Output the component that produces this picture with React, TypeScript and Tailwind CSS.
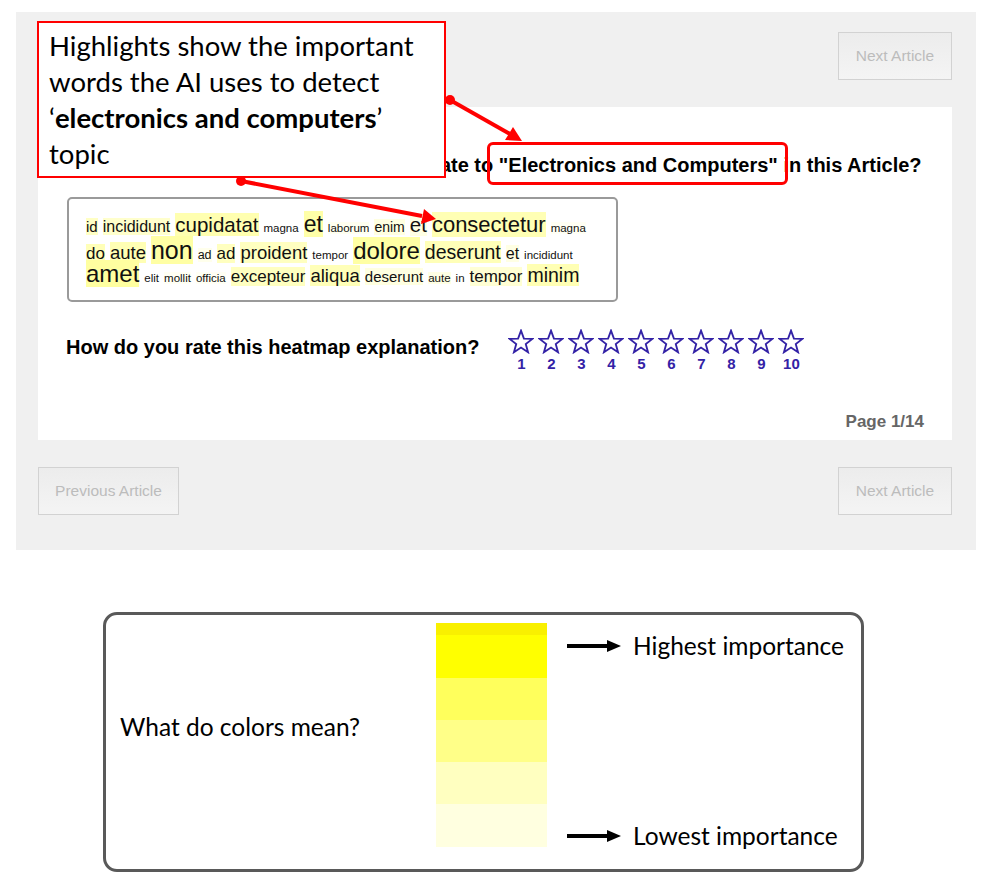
import React from 'react';

type Word = { t: string; size: number; bg: string };

const lines: Word[][] = [
    [
        { t: 'id', size: 15, bg: '#ffffc4' },
        { t: 'incididunt', size: 16, bg: '#ffffcc' },
        { t: 'cupidatat', size: 20.5, bg: '#ffffb0' },
        { t: 'magna', size: 11.5, bg: '#ffffff' },
        { t: 'et', size: 23, bg: '#ffffa8' },
        { t: 'laborum', size: 11.5, bg: '#fffff0' },
        { t: 'enim', size: 14, bg: '#ffffe0' },
        { t: 'et', size: 20.5, bg: '#ffffe4' },
        { t: 'consectetur', size: 22, bg: '#ffffb4' },
        { t: 'magna', size: 11.5, bg: '#fffff4' },
    ],
    [
        { t: 'do', size: 17, bg: '#ffffb8' },
        { t: 'aute', size: 18.5, bg: '#ffffb4' },
        { t: 'non', size: 25, bg: '#ffffa4' },
        { t: 'ad', size: 12.5, bg: '#ffffec' },
        { t: 'ad', size: 17, bg: '#ffffc0' },
        { t: 'proident', size: 18.5, bg: '#ffffc0' },
        { t: 'tempor', size: 11.5, bg: '#ffffff' },
        { t: 'dolore', size: 24, bg: '#ffffa4' },
        { t: 'deserunt', size: 19.5, bg: '#ffffb8' },
        { t: 'et', size: 16, bg: '#ffffe4' },
        { t: 'incididunt', size: 11.5, bg: '#ffffff' },
    ],
    [
        { t: 'amet', size: 24, bg: '#ffffa0' },
        { t: 'elit', size: 11.5, bg: '#ffffff' },
        { t: 'mollit', size: 11.5, bg: '#fffff4' },
        { t: 'officia', size: 11.5, bg: '#fffff4' },
        { t: 'excepteur', size: 17, bg: '#ffffc0' },
        { t: 'aliqua', size: 18.5, bg: '#ffffb8' },
        { t: 'deserunt', size: 15, bg: '#ffffe0' },
        { t: 'aute', size: 11.5, bg: '#ffffe4' },
        { t: 'in', size: 11.5, bg: '#ffffff' },
        { t: 'tempor', size: 17, bg: '#ffffd4' },
        { t: 'minim', size: 19.5, bg: '#ffffb4' },
    ],
];

const bands = [
    { h: 'h-[12px]', c: 'bg-[#f9f000]' },
    { h: 'h-[43px]', c: 'bg-[#ffff00]' },
    { h: 'h-[42px]', c: 'bg-[#ffff5c]' },
    { h: 'h-[42px]', c: 'bg-[#ffff88]' },
    { h: 'h-[42px]', c: 'bg-[#ffffc0]' },
    { h: 'h-[43px]', c: 'bg-[#ffffe0]' },
];

function Star() {
    return (
        <svg width="26" height="25" viewBox="0 0 24 23" fill="none">
            <polygon
                points="12,1.5 14.7,8.8 22.5,9.1 16.4,13.9 18.5,21.4 12,17.1 5.5,21.4 7.6,13.9 1.5,9.1 9.3,8.8"
                stroke="#3322a6"
                strokeWidth="1.7"
                strokeLinejoin="miter"
            />
        </svg>
    );
}

function NavButton({ label, className = '' }: { label: string; className?: string }) {
    return (
        <button
            className={`h-12 border border-[#d2d2d2] bg-gradient-to-b from-[#ececec] to-[#f4f4f4] text-[15.5px] text-[#bcbcbc] ${className}`}
        >
            {label}
        </button>
    );
}

function BlackArrow() {
    return (
        <svg width="54" height="14" viewBox="0 0 54 14">
            <line x1="0" y1="7" x2="42" y2="7" stroke="#000" strokeWidth="4" />
            <polygon points="40,1 54,7 40,13" fill="#000" />
        </svg>
    );
}

export default function App() {
    return (
        <div className="relative h-[886px] w-[984px] overflow-hidden bg-white font-['Liberation_Sans',Arial,sans-serif]">
            <div className="pt-3 pl-4">
                {/* survey panel */}
                <div className="w-[960px] bg-[#f0f0f0] pt-5 pr-6 pb-[35px] pl-[22px]">
                    <div className="flex justify-end">
                        <NavButton label="Next Article" className="w-[114px]" />
                    </div>

                    <div className="mt-[27px] h-[333px] bg-white pt-[46px] pl-[28px] pr-7">
                        <h2 className="ml-[15px] text-[20px] font-bold leading-[24px] text-black">
                            How well do the highlighted words relate to{' '}
                            <span className="relative">
                                "Electronics and Computers"
                                <span className="absolute -top-[12px] -bottom-[9px] -left-[12px] -right-[10px] rounded-[6px] border-[3px] border-[#ff0000]" />
                            </span>{' '}
                            in this Article?
                        </h2>

                        <div className="mt-[20px] ml-px w-[551px] rounded-[5px] border-2 border-[#9a9a9a] pt-[14px] pb-[13px] pl-[17px]">
                            {lines.map((line, i) => (
                                <div key={i} className="h-[24.5px] whitespace-nowrap text-[11px] leading-[24px] text-[#111]">
                                    {line.map((w, j) => (
                                        <span
                                            key={j}
                                            className="mr-[5px] leading-none"
                                            style={{ fontSize: w.size, backgroundColor: w.bg }}
                                        >
                                            {w.t}
                                        </span>
                                    ))}
                                </div>
                            ))}
                        </div>

                        <div className="mt-[27px] flex items-start">
                            <div className="mt-[6px] text-[20px] font-bold leading-[24px] text-black">
                                How do you rate this heatmap explanation?
                            </div>
                            <div className="ml-[29px] flex gap-[4px]">
                                {Array.from({ length: 10 }, (_, i) => (
                                    <div key={i} className="flex w-[26px] flex-col items-center">
                                        <Star />
                                        <span className="mt-[2px] text-[15px] font-bold leading-[16px] text-[#3322a6]">
                                            {i + 1}
                                        </span>
                                    </div>
                                ))}
                            </div>
                        </div>

                        <div className="mt-[40px] text-right text-[17px] font-bold leading-[20px] text-[#666]">
                            Page 1/14
                        </div>
                    </div>

                    <div className="mt-[27px] flex justify-between">
                        <NavButton label="Previous Article" className="w-[141px]" />
                        <NavButton label="Next Article" className="w-[114px]" />
                    </div>
                </div>
            </div>

            {/* legend */}
            <div className="mt-[62px] ml-[103px] flex h-[260px] w-[761px] rounded-[14px] border-[3px] border-[#595959] font-['Lato','Noto_Sans',sans-serif] text-[24.5px] text-black">
                <div className="flex w-[330px] items-center pl-[14px] pb-[30px]">What do colors mean?</div>
                <div className="mt-[8px] flex w-[111px] flex-col self-start">
                    {bands.map((b, i) => (
                        <div key={i} className={`${b.h} ${b.c}`} />
                    ))}
                </div>
                <div className="ml-[20px] mt-[8px] flex h-[224px] flex-col justify-between py-[8px]">
                    <div className="flex items-center gap-[12px] leading-[30px]">
                        <BlackArrow />
                        <span>Highest importance</span>
                    </div>
                    <div className="-mb-[12px] flex items-center gap-[12px] leading-[30px]">
                        <BlackArrow />
                        <span>Lowest importance</span>
                    </div>
                </div>
            </div>

            {/* callout */}
            <div className="absolute top-[21px] left-[37px] h-[157px] w-[409px] border-2 border-[#ff0000] bg-white pt-[5px] pl-[10px] font-['Lato','Noto_Sans',sans-serif] text-[27.5px] leading-[36px] text-black">
                Highlights show the important
                <br />
                words the AI uses to detect
                <br />‘<b>electronics and computers</b>’
                <br />
                topic
            </div>

            {/* red pointer arrows */}
            <svg className="pointer-events-none absolute inset-0" width="984" height="886">
                <circle cx="450" cy="100" r="5" fill="#ff0000" />
                <line x1="450" y1="100" x2="510" y2="134" stroke="#ff0000" strokeWidth="4" />
                <polygon points="522,141 505,140 513,127" fill="#ff0000" />
                <circle cx="241" cy="181" r="5" fill="#ff0000" />
                <line x1="241" y1="181" x2="422" y2="216" stroke="#ff0000" strokeWidth="4" />
                <polygon points="436,219 421,224 424,209" fill="#ff0000" />
            </svg>
        </div>
    );
}
